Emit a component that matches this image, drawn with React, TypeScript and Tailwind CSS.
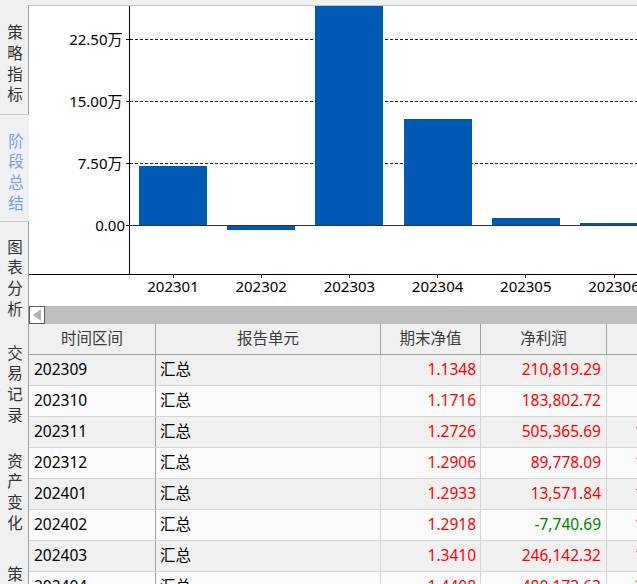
import React from "react";

const tabs: { chars: string[]; cls: string }[] = [
  {
    chars: ["策", "略", "指", "标"],
    cls: "flex h-[109px] w-[29px] shrink-0 flex-col items-center justify-center border-r border-[#a0a0a0] pl-[2px] pt-[8px] text-[15.5px] leading-[20.7px] text-[#333]",
  },
  {
    chars: ["阶", "段", "总", "结"],
    cls: "flex h-[108px] w-[29px] shrink-0 flex-col items-center justify-center border-y border-[#c8c8c8] pl-[3px] pt-[8px] text-[15.5px] leading-[20.7px] text-[#73a0f0]",
  },
  {
    chars: ["图", "表", "分", "析"],
    cls: "flex h-[108px] w-[29px] shrink-0 flex-col items-center justify-center border-r border-[#a0a0a0] pl-[2px] pt-[4px] text-[15.5px] leading-[20.7px] text-[#333]",
  },
  {
    chars: ["交", "易", "记", "录"],
    cls: "flex h-[108px] w-[29px] shrink-0 flex-col items-center justify-center border-r border-[#a0a0a0] pl-[2px] text-[15.5px] leading-[20.7px] text-[#333]",
  },
  {
    chars: ["资", "产", "变", "化"],
    cls: "flex h-[108px] w-[29px] shrink-0 flex-col items-center justify-center border-r border-[#a0a0a0] pl-[2px] text-[15.5px] leading-[20.7px] text-[#333]",
  },
  {
    chars: ["策", "略", "参", "数"],
    cls: "flex h-[108px] w-[29px] shrink-0 flex-col items-center justify-center border-r border-[#a0a0a0] pl-[2px] pt-[10px] text-[15.5px] leading-[20.7px] text-[#333]",
  },
];

const rows = [
  { p: "202309", nav: "1.1348", pnl: "210,819.29", neg: false, cum: "560,819.29" },
  { p: "202310", nav: "1.1716", pnl: "183,802.72", neg: false, cum: "744,622.01" },
  { p: "202311", nav: "1.2726", pnl: "505,365.69", neg: false, cum: "1,249,987.70" },
  { p: "202312", nav: "1.2906", pnl: "89,778.09", neg: false, cum: "1,339,765.79" },
  { p: "202401", nav: "1.2933", pnl: "13,571.84", neg: false, cum: "1,353,337.63" },
  { p: "202402", nav: "1.2918", pnl: "-7,740.69", neg: true, cum: "1,345,596.94" },
  { p: "202403", nav: "1.3410", pnl: "246,142.32", neg: false, cum: "1,591,739.26" },
  { p: "202404", nav: "1.4408", pnl: "480,173.63", neg: false, cum: "2,071,912.89" },
];

function Chart() {
  const barX = (i: number) => 110 + i * 88.2;
  const bars = [
    { top: 160, bottom: 219 },
    { top: 220, bottom: 224 },
    { top: 0, bottom: 219 },
    { top: 113, bottom: 219 },
    { top: 212, bottom: 219 },
    { top: 217, bottom: 219 },
  ];
  const xLabels = ["202301", "202302", "202303", "202304", "202305", "202306"];
  const grid = [
    { y: 33, label: "22.50万" },
    { y: 95, label: "15.00万" },
    { y: 157, label: "7.50万" },
  ];
  return (
    <svg width={608} height={300} className="block shrink-0 bg-white">
      {grid.map((g) => (
        <g key={g.label}>
          <line x1={101} x2={608} y1={g.y + 0.5} y2={g.y + 0.5} stroke="#222" strokeDasharray="3 2" shapeRendering="crispEdges" />
          <line x1={97} x2={101} y1={g.y + 0.5} y2={g.y + 0.5} stroke="#000" shapeRendering="crispEdges" />
          <text x={93.5} y={g.y + 5.5} textAnchor="end" fontSize={15} fill="#000">
            {g.label}
          </text>
        </g>
      ))}
      <line x1={97} x2={101} y1={219.5} y2={219.5} stroke="#000" shapeRendering="crispEdges" />
      <text x={96} y={224.5} textAnchor="end" fontSize={15} fill="#000">
        0.00
      </text>
      {bars.map((b, i) => (
        <rect key={i} x={barX(i)} y={b.top} width={68} height={b.bottom - b.top} fill="#0059b3" shapeRendering="crispEdges" />
      ))}
      <line x1={101} x2={608} y1={219.5} y2={219.5} stroke="#333" shapeRendering="crispEdges" />
      <line x1={100.5} x2={100.5} y1={0} y2={269} stroke="#000" shapeRendering="crispEdges" />
      <line x1={0} x2={608} y1={268.5} y2={268.5} stroke="#000" shapeRendering="crispEdges" />
      {xLabels.map((l, i) => {
        const cx = barX(i) + 34;
        return (
          <g key={l}>
            <line x1={cx} x2={cx} y1={268} y2={272} stroke="#000" shapeRendering="crispEdges" />
            <text x={cx} y={286} textAnchor="middle" fontSize={15} fill="#000">
              {l}
            </text>
          </g>
        );
      })}
    </svg>
  );
}

export default function App() {
  return (
    <div className="flex h-[584px] w-[637px] overflow-hidden bg-[#f0f0f0] font-['Noto_Sans','Noto_Sans_CJK_SC',sans-serif]">
      {/* Sidebar tabs */}
      <div className="flex w-[29px] shrink-0 flex-col pt-[5px]">
        {tabs.map((t, i) => (
          <div key={i} className={t.cls}>
            {t.chars.map((c, j) => (
              <div key={j}>{c}</div>
            ))}
          </div>
        ))}
      </div>

      {/* Main panel */}
      <div className="mt-[5px] flex w-[608px] shrink-0 flex-col overflow-hidden border-t border-[#c4c4c4]">
        <Chart />

        {/* Horizontal scrollbar */}
        <div className="flex h-[18px] w-[608px] shrink-0 bg-[#bebebe]">
          <div className="flex h-[18px] w-[16px] items-center justify-center border border-[#5a5a5a] bg-white">
            <svg width={9} height={12} viewBox="0 0 9 12">
              <polygon points="0,6 8,0 8,12" fill="#b4b4b4" />
            </svg>
          </div>
        </div>

        {/* Table */}
        <div className="flex flex-col text-[15.5px]">
          <div className="flex h-[31px] shrink-0 border-b border-[#a0a0a0] bg-[#f0f0f0] text-[#3c3c3c]">
            <div className="flex w-[127px] shrink-0 items-center justify-center border-r border-[#a0a0a0]">时间区间</div>
            <div className="flex w-[225px] shrink-0 items-center justify-center border-r border-[#a0a0a0]">报告单元</div>
            <div className="flex w-[100px] shrink-0 items-center justify-center border-r border-[#a0a0a0]">期末净值</div>
            <div className="flex w-[126px] shrink-0 items-center justify-center border-r border-[#a0a0a0]">净利润</div>
            <div className="flex w-[126px] shrink-0 items-center justify-center border-r border-[#a0a0a0]">累计盈亏</div>
          </div>
          {rows.map((r, i) => (
            <div
              key={r.p}
              className={
                i % 2 === 0
                  ? "flex h-[31px] shrink-0 border-b border-[#d5d5d5] bg-[#f0f0f0]"
                  : "flex h-[31px] shrink-0 border-b border-[#d5d5d5] bg-[#fafafa]"
              }
            >
              <div className="flex w-[127px] shrink-0 items-center border-r border-[#a0a0a0] pl-[5px] text-black">{r.p}</div>
              <div className="flex w-[225px] shrink-0 items-center border-r border-[#d5d5d5] pl-[4px] text-black">汇总</div>
              <div className="flex w-[100px] shrink-0 items-center justify-end border-r border-[#d5d5d5] pr-[4px] text-[#ff0000]">{r.nav}</div>
              <div
                className={
                  r.neg
                    ? "flex w-[126px] shrink-0 items-center justify-end border-r border-[#d5d5d5] pr-[5px] text-[#008000]"
                    : "flex w-[126px] shrink-0 items-center justify-end border-r border-[#d5d5d5] pr-[5px] text-[#ff0000]"
                }
              >
                {r.pnl}
              </div>
              <div className="flex w-[126px] shrink-0 items-center justify-end border-r border-[#d5d5d5] pr-[5px] text-[#ff0000]">{r.cum}</div>
            </div>
          ))}
        </div>
      </div>
    </div>
  );
}
